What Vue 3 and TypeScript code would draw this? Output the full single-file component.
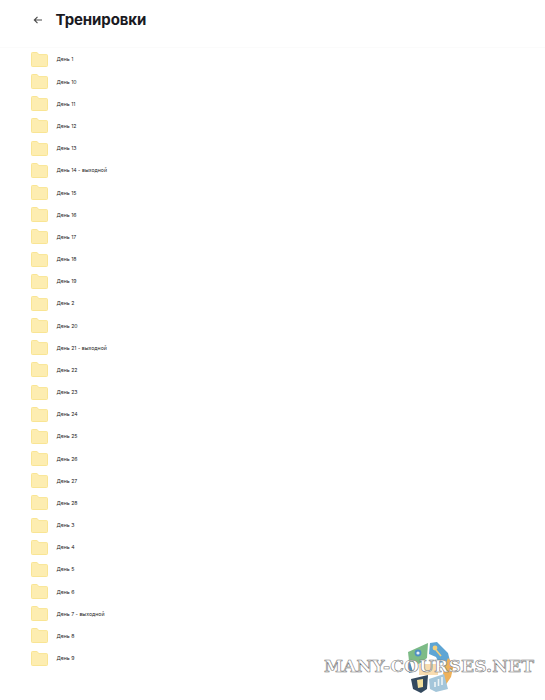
<script setup lang="ts">
const names: string[] = [
  'День 1', 'День 10', 'День 11', 'День 12', 'День 13', 'День 14 - выходной', 'День 15',
  'День 16', 'День 17', 'День 18', 'День 19', 'День 2', 'День 20', 'День 21 - выходной',
  'День 22', 'День 23', 'День 24', 'День 25', 'День 26', 'День 27', 'День 28',
  'День 3', 'День 4', 'День 5', 'День 6', 'День 7 - выходной', 'День 8', 'День 9'
]
</script>

<template>
  <div class="page">
    <header class="head">
      <svg class="back" width="10" height="10" viewBox="0 0 10 10" fill="none">
        <path d="M9 5H1.5M4.5 1.8 1.3 5l3.2 3.2" stroke="#4a4a4a" stroke-width="1.1" />
      </svg>
      <h1 class="title">Тренировки</h1>
    </header>
    <ul class="list">
      <li v-for="name in names" :key="name" class="row">
        <svg class="folder" width="17" height="15" viewBox="0 0 17 15">
          <path
            d="M.5 1.3C.5.8.8.5 1.3.5h4.6L8 2.6h7.7c.5 0 .8.3.8.8v10.3c0 .5-.3.8-.8.8H1.3c-.5 0-.8-.3-.8-.8z"
            fill="#fdedb1"
            stroke="#f9e594"
          />
        </svg>
        <span class="name">{{ name }}</span>
      </li>
    </ul>
    <div class="mark">
      <svg class="logo" width="60" height="56" viewBox="0 0 60 56" fill="none">
        <!-- green -->
        <path d="M8 14 28 5l-1 15-8 6-10-3z" fill="#7dbb86" />
        <circle cx="18" cy="15" r="3.4" fill="#4f8fc4" />
        <circle cx="18" cy="15" r="1.6" fill="#e6f0f4" />
        <!-- blue with key -->
        <path d="M30 5l7-1 11 11 2 8-11 2-3-6-7-3z" fill="#5ea5d4" />
        <circle cx="35" cy="10" r="2.4" fill="#f3cf7a" />
        <path d="M36 12l5 6" stroke="#f3cf7a" stroke-width="1.6" />
        <!-- orange -->
        <path d="M48 20l6 6-3 13-6 9-2-12 2-9z" fill="#eeb15a" />
        <!-- light blue -->
        <path d="M29 41l15-5 4 15-12 3-6-3z" fill="#a4c6da" />
        <path d="M35 49v-5M38.500 48v-7M42 47v-8" stroke="#eef4f6" stroke-width="1.6" />
        <!-- dark -->
        <path d="M11 41l17-4-1 14-6 4-8-4z" fill="#34495e" />
        <path d="M17 42l6-1v8l-5 1z" fill="#f4df9b" />
        <!-- left and centre, mostly under the text -->
        <path d="M6 25l4-1 3 10-4 1z" fill="#4f8fbe" />
        <path d="M19 26h19v11H19z" fill="#f8dcb0" />
      </svg>
      <span class="mark-text">MANY-COURSES.NET</span>
    </div>
  </div>
</template>

<style scoped>
.page {
  position: relative;
  width: 545px;
  height: 700px;
  overflow: hidden;
  background: #fff;
  font-family: Inter, "Open Sans", sans-serif;
}
.head {
  display: flex;
  align-items: center;
  height: 48.4px;
  padding: 0 0 8.4px 33px;
  box-sizing: border-box;
  border-bottom: 1px solid #fbfbfb;
}
.back {
  margin-right: 12.6px;
}
.title {
  margin: 0;
  font-size: 15px;
  font-weight: 700;
  letter-spacing: -0.1px;
  color: #1a1a1f;
}
.list {
  margin: 0;
  padding: 0 0 0 31px;
  list-style: none;
  display: grid;
  grid-auto-rows: 22.18px;
}
.row {
  display: flex;
  align-items: center;
  gap: 8.5px;
}
.name {
  font-size: 5.2px;
  color: #222;
}
.mark {
  position: absolute;
  left: 323px;
  top: 638px;
  width: 212px;
  height: 56px;
  display: flex;
  align-items: center;
  justify-content: center;
}
.logo {
  position: absolute;
  left: 77px;
  top: 0;
}
.mark-text {
  position: relative;
  font-family: "DejaVu Serif", serif;
  font-size: 17.2px;
  font-weight: 700;
  letter-spacing: 0.1px;
  white-space: nowrap;
  color: #fff;
  -webkit-text-stroke: 0.6px #777;
}
</style>
